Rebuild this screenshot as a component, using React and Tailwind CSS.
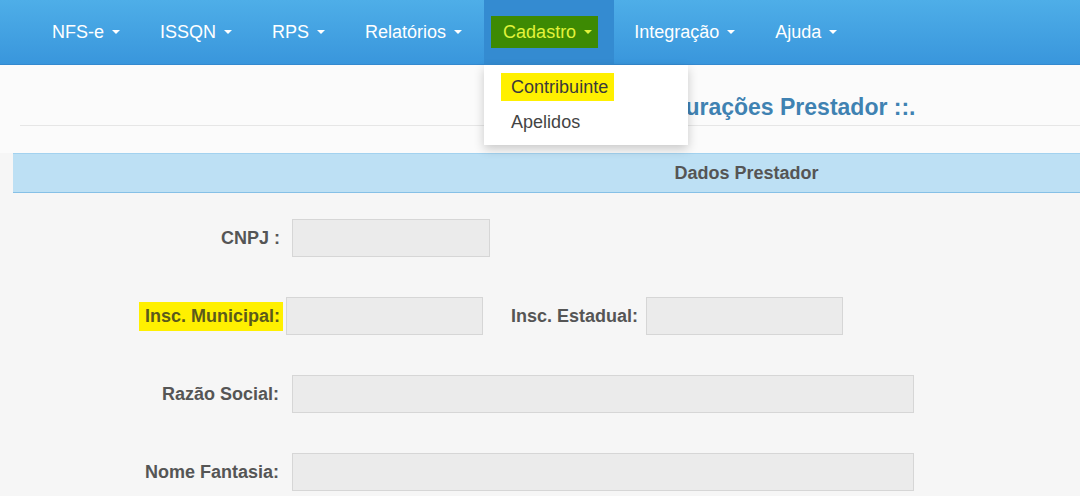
import React from 'react';

const menu = ['NFS-e', 'ISSQN', 'RPS', 'Relatórios', 'Cadastro', 'Integração', 'Ajuda'];

const Caret = () => (
  <span className="ml-[8px] inline-block w-0 h-0 border-t-[4px] border-t-current border-x-[4px] border-x-transparent" />
);

const Field = ({ w }) => (
  <div className={`h-[38px] ${w} bg-[#ebebeb] border border-[#d6d6d6]`} />
);

export default function App() {
  return (
    <div className="w-[1080px] h-[496px] overflow-hidden bg-[#f6f6f6] font-['Liberation_Sans',Arial,sans-serif]">
      {/* Navbar */}
      <nav className="h-[65px] bg-gradient-to-b from-[#4eaee8] to-[#3996dc] border-b border-[#3489cf] flex pl-[32px]">
        {menu.map((item) =>
          item === 'Cadastro' ? (
            <div key={item} className="relative h-full bg-[#348bd1] flex items-center ml-[2px] pl-[7px] pr-[16px]">
              <span className="flex items-center h-[32px] bg-[#3d8a03] pl-[12px] pr-[6px] text-[18px] text-[#e2f33b]">
                {item}
                <Caret />
              </span>
              {/* Dropdown */}
              <div className="absolute top-[65px] left-0 w-[204px] h-[80px] bg-white shadow-[0_4px_10px_rgba(0,0,0,0.2)] z-10 text-[18px] text-[#3a3a3a]">
                <div className="ml-[17px] mt-[8px] w-[113px] h-[28px] bg-[#fff000] pl-[10px] flex items-center">
                  Contribuinte
                </div>
                <div className="pl-[27px] mt-[7px] h-[28px] flex items-center text-[#444]">Apelidos</div>
              </div>
            </div>
          ) : (
            <div key={item} className="h-full flex items-center px-[20px] text-[18px] text-white">
              {item}
              <Caret />
            </div>
          )
        )}
      </nav>

      {/* Content */}
      <div className="w-[1480px]">
        <div className="bg-[#fbfbfb] pl-[13px] pt-px pb-[27px]">
          <div className="h-[60px] flex items-end justify-center pb-[5px] ml-[7px] border-b border-[#e6e6e6]">
            <h1 className="text-[23px] leading-[26px] font-bold text-[#3f82b2]">.:: Configurações Prestador ::.</h1>
          </div>
        </div>

        <div className="ml-[13px]">
          <div className="h-[40px] bg-[#bde0f4] border-t border-[#a3d2ef] border-b border-b-[#86c0e6] flex items-center justify-center">
            <span className="text-[18px] font-bold text-[#555]">Dados Prestador</span>
          </div>

          <div className="pt-[26px] flex flex-col gap-[40px] text-[18px] font-bold text-[#555]">
            <div className="flex items-center h-[38px]">
              <div className="w-[267px] text-right">CNPJ :</div>
              <div className="ml-[12px]"><Field w="w-[198px]" /></div>
            </div>

            <div className="flex items-center h-[38px]">
              <div className="w-[270px] flex justify-end">
                <span className="bg-[#fff000] pl-[6px] pr-[3px] h-[29px] flex items-center text-[#5b5a1c]">Insc. Municipal:</span>
              </div>
              <div className="ml-[3px]"><Field w="w-[197px]" /></div>
              <div className="ml-[28px]">Insc. Estadual:</div>
              <div className="ml-[8px]"><Field w="w-[197px]" /></div>
            </div>

            <div className="flex items-center h-[38px]">
              <div className="w-[266px] text-right">Razão Social:</div>
              <div className="ml-[13px]"><Field w="w-[622px]" /></div>
            </div>

            <div className="flex items-center h-[38px]">
              <div className="w-[266px] text-right">Nome Fantasia:</div>
              <div className="ml-[13px]"><Field w="w-[622px]" /></div>
            </div>
          </div>
        </div>
      </div>
    </div>
  );
}
